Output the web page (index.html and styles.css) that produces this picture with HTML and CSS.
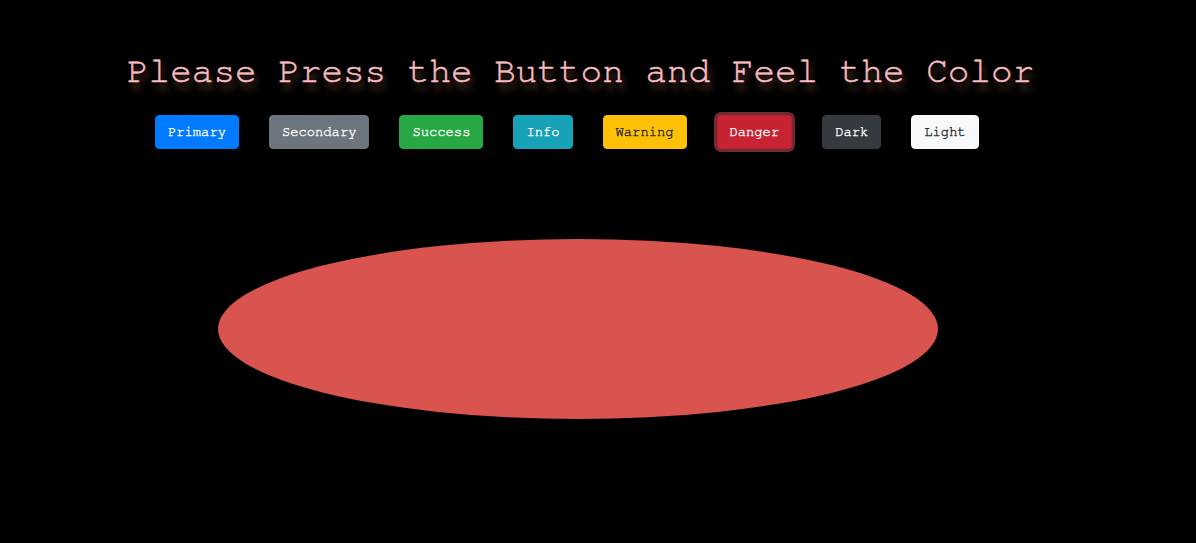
FILE: index.html
```html
<!DOCTYPE html>
<html>
<head>
<meta charset="utf-8">
<link rel="stylesheet" href="styles.css">
</head>
<body>
<div class="page">
  <h1 class="title">Please Press the Button and Feel the Color</h1>
  <div class="buttons">
    <button class="btn btn-primary">Primary</button>
    <button class="btn btn-secondary">Secondary</button>
    <button class="btn btn-success">Success</button>
    <button class="btn btn-info">Info</button>
    <button class="btn btn-warning">Warning</button>
    <button class="btn btn-danger is-focused">Danger</button>
    <button class="btn btn-dark">Dark</button>
    <button class="btn btn-light">Light</button>
  </div>
  <div class="ellipse"></div>
</div>
</body>
</html>
```

FILE: styles.css
```css
html, body {
  margin: 0;
  padding: 0;
  background: #000;
  height: 100%;
}
.page {
  display: flex;
  flex-direction: column;
  align-items: flex-start;
  font-family: "Nimbus Mono PS", "Nimbus Mono L", "FreeMono", "Courier 10 Pitch", "Liberation Mono", monospace;
}
.title {
  margin: 51px 0 0 127px;
  font-family: "Nimbus Mono PS", "Nimbus Mono L", "FreeMono", "Courier 10 Pitch", "Liberation Mono", monospace;
  font-size: 36px;
  line-height: 40px;
  font-weight: normal;
  color: #f8bcc2;
  -webkit-text-stroke: 0.5px #f8bcc2;
  text-shadow: 3px 7px 6px rgba(120, 75, 55, 0.85);
  white-space: nowrap;
}
.buttons {
  display: flex;
  gap: 30px;
  margin: 24px 0 0 155px;
}
.btn {
  font-family: "Nimbus Mono PS", "Nimbus Mono L", "FreeMono", "Courier 10 Pitch", "Liberation Mono", monospace;
  font-size: 13.8px;
  line-height: 20px;
  padding: 6px 12px;
  border: 1px solid transparent;
  border-radius: 4px;
  -webkit-text-stroke: 0.35px currentColor;
  cursor: pointer;
}
.btn-primary { background: #007bff; border-color: #007bff; color: #fff; }
.btn-secondary { background: #6c757d; border-color: #6c757d; color: #fff; }
.btn-success { background: #28a745; border-color: #28a745; color: #fff; }
.btn-info { background: #17a2b8; border-color: #17a2b8; color: #fff; }
.btn-warning { background: #ffc107; border-color: #ffc107; color: #212529; }
.btn-danger { background: #c82333; border-color: #bd2130; color: #fff; }
.btn-danger.is-focused { box-shadow: 0 0 0 3px rgba(225, 83, 97, 0.5); }
.btn-dark { background: #343a40; border-color: #343a40; color: #fff; }
.btn-light { background: #f8f9fa; border-color: #f8f9fa; color: #212529; }
.ellipse {
  margin: 90px 0 0 218px;
  width: 720px;
  height: 180px;
  border-radius: 50%;
  background: #d9534f;
}
```
